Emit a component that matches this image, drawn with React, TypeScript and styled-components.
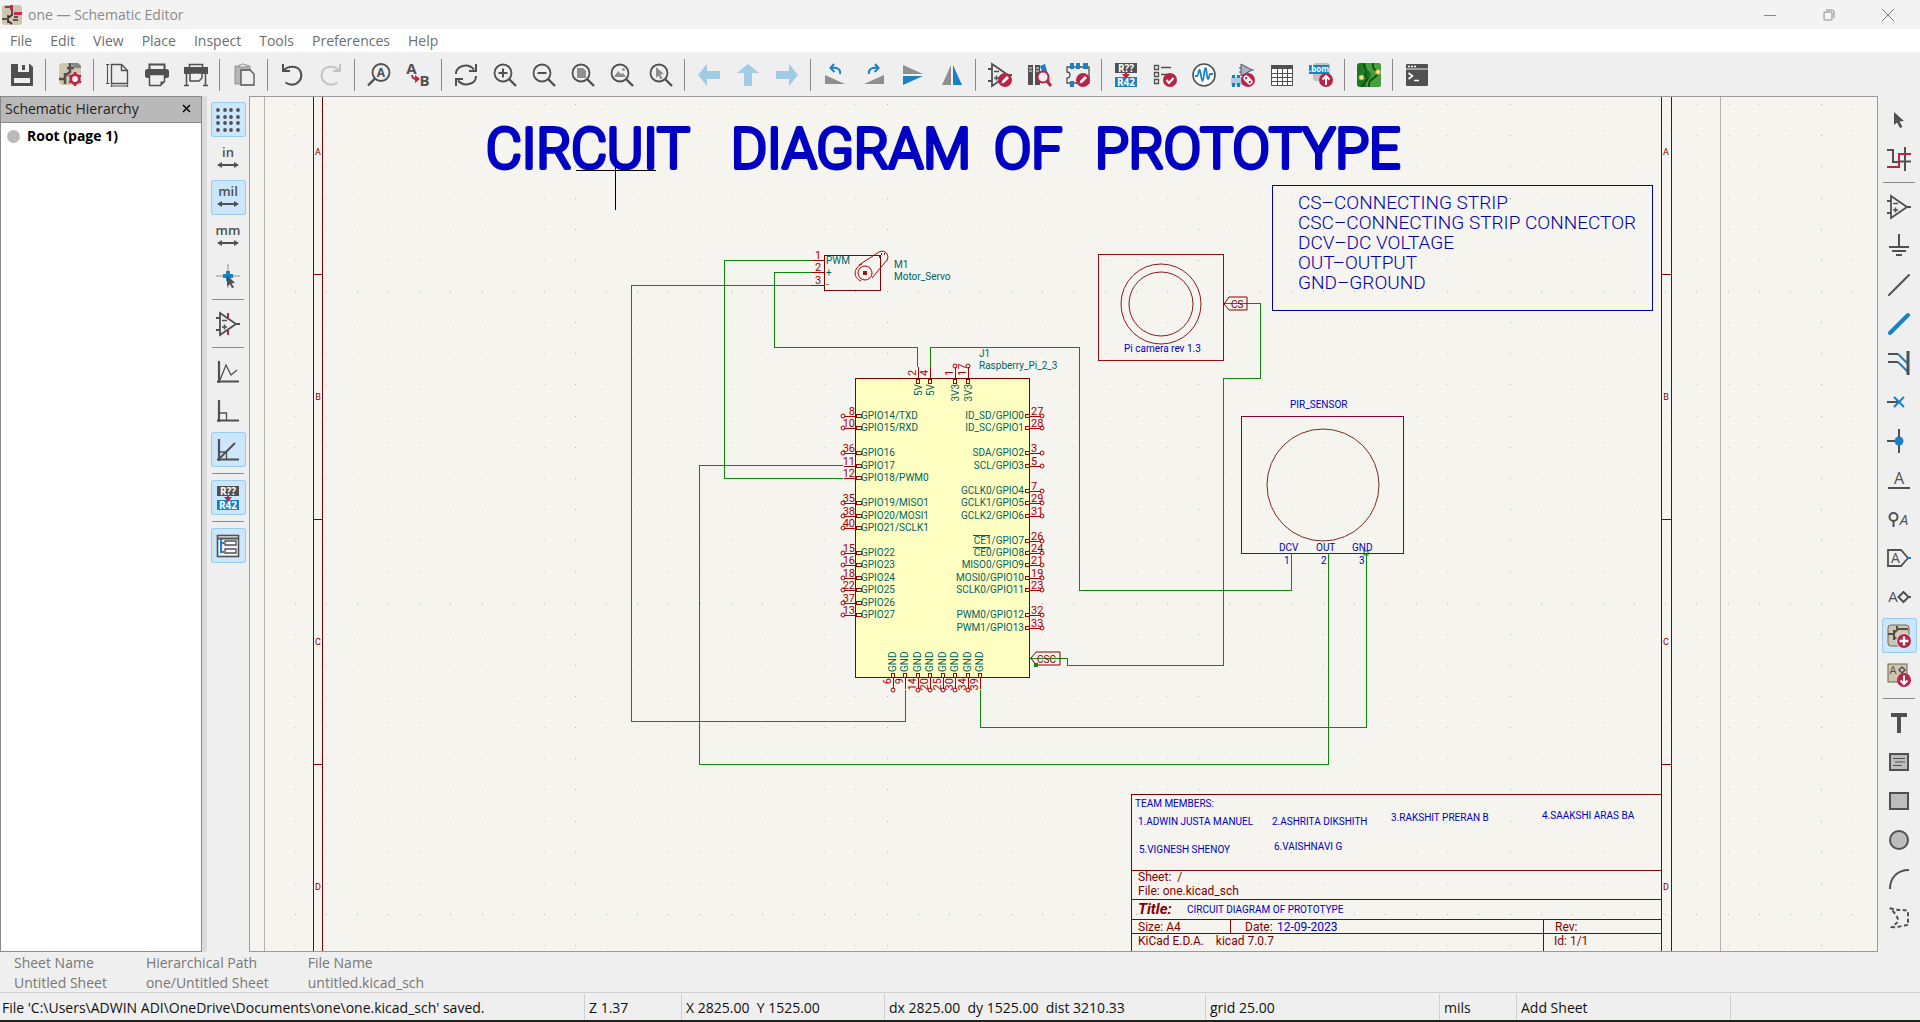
import React from "react";
import styled, { createGlobalStyle, css } from "styled-components";

const ui = `"Open Sans", "Noto Sans", sans-serif`;
const INK = "#505050";
const BLUE = "#1a81c4";
const RED = "#b92549";
const MID = "#8f8f8f";
const PANEL = "#efefef";

const GlobalStyle = createGlobalStyle`
  *, *::before, *::after { box-sizing: border-box; }
  html, body { margin: 0; height: 100%; }
  body { font-family: ${ui}; background: ${PANEL}; color: #111; overflow: hidden; }
  button { font: inherit; color: inherit; background: none; border: 0; padding: 0; margin: 0; }
`;

const Window = styled.div`
  display: flex;
  flex-direction: column;
  height: 100vh;
  background: ${PANEL};
  border-bottom: 2px solid #1d221d;
`;

const TitleBar = styled.header`
  display: flex;
  align-items: center;
  flex: none;
  height: 29px;
  padding: 0 3px 0 2px;
  background: #f3f3f3;
`;

const WindowTitle = styled.h1`
  flex: 1;
  margin: 0 0 0 6px;
  font-size: 14px;
  font-weight: 400;
  line-height: 20px;
  color: #8c8c8c;
`;

const WindowButton = styled.button`
  display: grid;
  place-items: center;
  width: 59px;
  height: 28px;
`;

const MenuBar = styled.nav`
  display: flex;
  align-items: center;
  flex: none;
  gap: 18px;
  height: 23px;
  padding: 1px 0 0 10px;
  background: #fff;
`;

const MenuItem = styled.button`
  font-size: 14px;
  line-height: 20px;
  color: #6e6e6e;
`;

const TopTools = styled.div`
  display: flex;
  align-items: center;
  flex: none;
  height: 44px;
  padding: 1px 2px 0;
  background: ${PANEL};
`;

const SideTools = styled.div`
  display: flex;
  flex-direction: column;
  align-items: center;
  flex: none;
  width: 42px;
  padding-top: 4px;
  background: ${PANEL};
`;

const ToolButton = styled.button<{ $on?: boolean }>`
  display: grid;
  place-items: center;
  flex: none;
  width: 39px;
  height: 39px;
  border: 2px solid transparent;
  background-clip: padding-box;

  ${(p) =>
    p.$on &&
    css`
      background-color: #cce6fb;
      box-shadow: inset 0 0 0 1px #9ccbf0;
      border-radius: 5px;
    `}
`;

const Glyph = styled.svg`
  display: block;
  width: 24px;
  height: 24px;
  overflow: visible;
`;

const Divider = styled.div<{ $flat?: boolean }>`
  flex: none;
  background: #8a8a8a;
  ${(p) =>
    p.$flat
      ? css`
          width: 32px;
          height: 1px;
          margin: 4px 0;
        `
      : css`
          width: 1px;
          height: 32px;
          margin: 0 4px;
        `}
`;

const Work = styled.main`
  display: flex;
  flex: 1;
  min-height: 0;
`;

const Hierarchy = styled.aside`
  display: flex;
  flex-direction: column;
  flex: none;
  width: 202px;
  border: 1px solid #8a8a8a;
  background: #fff;
`;

const HierarchyHead = styled.div`
  display: flex;
  align-items: center;
  justify-content: space-between;
  height: 26px;
  padding: 0 9px 2px 4px;
  background: #b9b9b9;
  border-bottom: 1px solid #8a8a8a;
  font-size: 14px;
  line-height: 20px;
  color: #222;
`;

const HierarchyItem = styled.button`
  display: flex;
  align-items: center;
  gap: 7px;
  height: 26px;
  padding-left: 6px;
  font-size: 14px;
  font-weight: 700;
  line-height: 20px;
  color: #000;
`;

const Bullet = styled.span`
  width: 13px;
  height: 13px;
  border-radius: 50%;
  background: #bababa;
`;

const Sash = styled.div`
  flex: none;
  width: 5px;
  background: #dcdcdc;
`;

const Canvas = styled.section`
  position: relative;
  flex: 1;
  min-width: 0;
  border: 1px solid #9a9a9a;
  background: #f5f4ef;
  overflow: hidden;
`;

const Sheet = styled.svg`
  position: absolute;
  inset: 0;
  width: 100%;
  height: 100%;
  font-family: Roboto, sans-serif;
  font-size: 10px;
`;

const MessagePanel = styled.dl`
  display: flex;
  flex: none;
  gap: 39px;
  height: 41px;
  margin: 0;
  padding: 1px 14px 0;
  color: #777;
  font-size: 14px;
  line-height: 20px;
  border-bottom: 1px solid #cfcfcf;

  dt, dd { margin: 0; }
`;

const StatusBar = styled.footer`
  display: grid;
  grid-template-columns: 585fr 97fr 203fr 321fr 234fr 77fr 214fr 189fr;
  align-items: center;
  flex: none;
  height: 27px;
`;

const StatusField = styled.output`
  height: 26px;
  padding-left: 4px;
  overflow: hidden;
  border-right: 1px solid #cfcfcf;
  font-size: 14px;
  line-height: 27px;
  white-space: pre;
  color: #111;

  &:first-child { padding-left: 2px; }
  &:last-child { border-right: 0; }
`;

/* ---------- icons ---------- */

const line = { fill: "none", stroke: INK, strokeWidth: 2 } as const;
const bold = { fontFamily: "Open Sans, sans-serif", fontWeight: 700 } as const;

const Badge = ({ children }: { children: React.ReactNode }) => (
  <g>
    <circle cx="17" cy="17" r="7" fill={RED} />
    {children}
  </g>
);

const Pencil = () => (
  <Badge>
    <path d="M13.500 20.500l1-3 4.500-4.500 2 2-4.500 4.500z" fill="#fff" />
  </Badge>
);

const Magnifier = ({ children }: { children?: React.ReactNode }) => (
  <g>
    {children}
    <circle cx="10" cy="10" r="8.500" {...line} strokeWidth={1.8} />
    <path d="M16 16l7 7" {...line} strokeWidth={2.4} />
  </g>
);

const Opamp = ({ pins = false }: { pins?: boolean }) => (
  <g>
    {pins && <path d="M12 1v5M12 18v5" stroke={RED} strokeWidth="2" />}
    <path d="M4 1v22L20 12z M20 12h4 M0 6h4 M0 18h4" {...line} strokeWidth={1.8} />
    <path d="M6 8.500h5M6 15h5M8.500 12.500v5" {...line} strokeWidth={1.5} />
  </g>
);

const Annotate = () => (
  <g>
    <rect x="1" y="0" width="22" height="10" fill={INK} />
    <rect x="1" y="14" width="22" height="10" fill={BLUE} />
    <path d="M11 9h2v2h3l-4 5-4-5h3z" fill={RED} />
    <text x="12" y="9" textAnchor="middle" fontSize="10" fill="#fff" {...bold}>R??</text>
    <text x="12" y="23" textAnchor="middle" fontSize="10" fill="#fff" {...bold}>R42</text>
  </g>
);

const Unit = ({ label }: { label: string }) => (
  <g>
    <text x="12" y="10" textAnchor="middle" fontSize="13" fontFamily="Open Sans, sans-serif" fontWeight="600" fill={INK}>{label}</text>
    <path d="M4 18h16" {...line} />
    <path d="M1 18l5-3v6zM23 18l-5-3v6z" fill={INK} />
  </g>
);

const Arrow = ({ turn }: { turn: number }) => (
  <path transform={`rotate(${turn} 12 12)`} d="M1 12l9-11v7h13v8H10v7z" fill="#9fcbe6" />
);

const icons: Record<string, React.ReactNode> = {
  save: (
    <g>
      <path d="M1 1h19l3 3v19H1z" fill={INK} />
      <path d="M8 1h11v8H8z M4 15h16v5H4z" fill={PANEL} />
      <path d="M12 2h3v5h-3z" fill={INK} />
    </g>
  ),
  setup: (
    <g>
      <rect x="1" y="0" width="22" height="22" rx="4" fill="#d2c5ad" />
      <path d="M1 16h6M7 10v11M7 13l5-4V0M9 5h7" {...line} strokeWidth={2.5} />
      <path d="M12 0l5 5h6V3l-3-3z" fill="#858585" />
      <circle cx="17" cy="16" r="4.200" fill={PANEL} stroke={RED} strokeWidth="2.600" />
      <path d="M17 9v3M17 20v3M11 12.500l2.500 1.500M20.500 18l2.500 1.500M11 19.500l2.500-1.500M20.500 14l2.500-1.500" stroke={RED} strokeWidth="2.600" />
    </g>
  ),
  page: (
    <g>
      <path d="M5.500 1.500h10l6 6v13h-16z M15.500 1.500v6h6" {...line} strokeWidth={1.4} />
      <path d="M1.500 1v20M0 1.500h3.500M0 20.500h3.500M5 23h17M5.500 21.500v2.500M21.500 21.500v2.500" {...line} strokeWidth={1.1} />
    </g>
  ),
  print: (
    <g>
      <path d="M4.500 6V1.500h15V6" {...line} />
      <rect x="0" y="6" width="24" height="9" rx="2.500" fill={INK} />
      <path d="M4.500 11.500h15v7l-4 4h-11z" fill={PANEL} stroke={INK} strokeWidth="1.500" />
      <path d="M15.500 22.500v-4h4z" fill={INK} />
    </g>
  ),
  plot: (
    <g>
      <path d="M5.500 4V1.500h13V4" {...line} strokeWidth={1.5} />
      <path d="M0 4h24v7H0z" fill={INK} />
      <path d="M6 10h12v5l-3 3H6z" fill={PANEL} stroke={INK} strokeWidth="1.500" />
      <path d="M2.500 10v12M21.500 10v12M0 22.500h5M19 22.500h5" {...line} strokeWidth={1.5} />
    </g>
  ),
  paste: (
    <g>
      <path d="M3 3h15v18H3z" fill="#b5b5b5" stroke={MID} />
      <path d="M7 4V2h2l1-1h2l1 1h2v2z" fill={PANEL} stroke={MID} />
      <path d="M9 7h9l4 4v11H9z" fill={PANEL} stroke={INK} strokeWidth="1.300" />
    </g>
  ),
  undo: <path d="M3 1v7h7M3.500 7.500c5-5 13-5 16.500 0 3 5 1 11-4.500 13.500-3 1-7 .6-10-1.500" {...line} />,
  redo: <path d="M21 1v7h-7M20.500 7.500c-5-5-13-5-16.500 0-3 5-1 11 4.500 13.500 3 1 7 .6 10-1.500" {...line} stroke="#c3c3c3" />,
  find: (
    <g>
      <circle cx="14" cy="9.500" r="8.500" {...line} strokeWidth={1.8} />
      <path d="M8 15.500l-7 7" {...line} strokeWidth={2.4} />
      <text x="14" y="14" textAnchor="middle" fontSize="12" fill={INK} {...bold}>A</text>
    </g>
  ),
  replace: (
    <g>
      <text x="5.500" y="11" textAnchor="middle" fontSize="15" fill={INK} {...bold}>A</text>
      <text x="18.500" y="23" textAnchor="middle" fontSize="15" fill={INK} {...bold}>B</text>
      <path d="M6 12c0 3 2 4 5 4" fill="none" stroke={RED} strokeWidth="2" />
      <path d="M9 12l5 4-5 4z" fill={RED} />
    </g>
  ),
  refresh: <path d="M2 11C2 2.500 14-.5 20 6.500M22 1v7h-7M22 13c0 8.500-12 11.500-18 4.500M2 23v-7h7" {...line} />,
  zoomin: <Magnifier><path d="M5.500 10h9M10 5.500v9" {...line} /></Magnifier>,
  zoomout: <Magnifier><path d="M5.500 10h9" {...line} /></Magnifier>,
  zoomfit: <Magnifier><path d="M6 5h6l3 3v7H6z" fill={MID} /></Magnifier>,
  zoomobj: <Magnifier><path d="M4 14l4-6 3 3 2-1 3 4z" fill={MID} /><circle cx="13.500" cy="6.500" r="1.500" fill={MID} /></Magnifier>,
  zoomsel: <Magnifier><path d="M7 4l8 7-3.500.5 2 4-2 1-2-4L7 15z" fill={MID} /></Magnifier>,
  back: <Arrow turn={0} />,
  up: <Arrow turn={90} />,
  forward: <Arrow turn={180} />,
  ccw: (
    <g>
      <path d="M2 12v9h20z" fill={MID} />
      <path d="M17 11c1-5-3-7-9-6M11 1L7.500 5l4 4" fill="none" stroke={BLUE} strokeWidth="2" />
    </g>
  ),
  cw: (
    <g>
      <path d="M22 12v9H2z" fill={MID} />
      <path d="M7 11c-1-5 3-7 9-6M13 1l3.500 4-4 4" fill="none" stroke={BLUE} strokeWidth="2" />
    </g>
  ),
  flipv: (
    <g>
      <path d="M2 2v9h20z" fill={MID} />
      <path d="M2 22v-9h20z" fill={BLUE} />
    </g>
  ),
  fliph: (
    <g>
      <path d="M2 22h9V2z" fill={MID} />
      <path d="M22 22h-9V2z" fill={BLUE} />
    </g>
  ),
  symed: <g><Opamp /><Pencil /></g>,
  library: (
    <g>
      <path d="M1 2h5v20H1zM8 2h5v20H8z" fill={INK} />
      <path d="M13 3l5-2 5 17-4 2z" fill={BLUE} />
      <path d="M2 5h3M2 8h3M9 5h3M9 8h3" stroke={PANEL} />
      <circle cx="16" cy="14" r="5.500" fill={PANEL} stroke={RED} strokeWidth="2" />
      <path d="M20 18l4 5" stroke={RED} strokeWidth="3" />
    </g>
  ),
  fped: (
    <g>
      <path d="M1 4h22v16H1v-5c4 0 4-6 0-6z" fill="none" stroke={INK} strokeWidth="1.300" />
      <path d="M4 0h4v6H4zM10 0h4v6h-4zM17 0h5v6h-5zM4 18h4v6H4z" fill={BLUE} />
      <Pencil />
    </g>
  ),
  annotate: <Annotate />,
  erc: (
    <g>
      <path d="M1.500 2.500h4v4h-4zM1.500 9.500h4v4h-4zM1.500 16.500h4v4h-4z" {...line} strokeWidth={1.3} />
      <path d="M8 4.500h10M8 11.500h6" {...line} strokeWidth={1.5} />
      <Badge><path d="M13.500 17l2.500 3 4.500-5" fill="none" stroke="#fff" strokeWidth="2" /></Badge>
    </g>
  ),
  sim: (
    <g>
      <circle cx="12" cy="12" r="11" fill="#fff" stroke={INK} strokeWidth="1.600" />
      <path d="M3 13h2c2 0 1-6 2.500-6S9 18 10.500 18 12 5 13.500 5s1 11 2.500 11 1-5 2-5h3" fill="none" stroke={BLUE} strokeWidth="1.800" />
    </g>
  ),
  assign: (
    <g>
      <path d="M10 1v12l11-6zM8 5h2M8 9h2M21 7h2" fill="#a5b5c5" stroke={INK} />
      <path d="M0 14h13v8H0z" fill="#a8cce4" />
      <path d="M1 12h3v3H1zM6 12h3v3H6zM1 20h3v4H1zM6 20h3v4H6z" fill={BLUE} />
      <Badge>
        <g transform="rotate(45 17 17)" fill="none" stroke="#fff" strokeWidth="1.500">
          <rect x="12.500" y="15" width="5.500" height="4" rx="2" />
          <rect x="16" y="15" width="5.500" height="4" rx="2" />
        </g>
      </Badge>
    </g>
  ),
  table: (
    <g>
      <path d="M1.500 2.500h21v20h-21z" fill="#fff" stroke={INK} />
      <path d="M1 2h22v4H1z" fill={INK} />
      <path d="M1.500 10.500h21M1.500 14.500h21M1.500 18.500h21M7.500 6v16M12.500 6v16M17.500 6v16" fill="none" stroke={INK} />
    </g>
  ),
  bom: (
    <g>
      <rect x="4" y="0" width="17" height="18" rx="3" fill="#c2c2c2" />
      <rect x="0" y="2" width="20" height="9" fill={BLUE} />
      <text x="10" y="9" textAnchor="middle" fontSize="8" fill="#fff" {...bold}>.bom</text>
      <Badge><path d="M17 22v-8M13.500 16.500L17 13l3.500 3.500" fill="none" stroke="#fff" strokeWidth="2" /></Badge>
    </g>
  ),
  pcb: (
    <g>
      <rect width="24" height="24" rx="3" fill="#1b7a1f" />
      <path d="M9 0v3c0 6 5 4 5 9s-5 4-5 8v4h12q3 0 3-3V3q0-3-3-3z" fill="#45a03f" />
      <path d="M4.500 14.500c4-1 5-2 5-6s-3-4-3-8M12 24v-3c0-6 8-5 9-12M16 0v3c0 3 2 4 5 6M5 24c0-4 6-5 6-10" fill="none" stroke="#0d5212" strokeWidth="1.800" />
      <circle cx="4.500" cy="14.500" r="2" fill="#fff" stroke="#eab23c" strokeWidth="1.500" />
      <circle cx="21" cy="9" r="2" fill="#fff" stroke="#eab23c" strokeWidth="1.500" />
    </g>
  ),
  console: (
    <g>
      <rect x="1" y="1" width="22" height="22" rx="1" fill={INK} />
      <path d="M1 6h22" stroke={PANEL} />
      <path d="M3 3.500h2M6 3.500h2M9 3.500h2" stroke="#fff" strokeWidth="1.500" />
      <path d="M3.500 10l4 3-4 3M9 17.500h5" fill="none" stroke="#fff" strokeWidth="1.600" />
    </g>
  ),
  grid: (
    <g fill={INK}>
      {[2, 9, 15, 22].map((y) => [2, 9, 15, 22].map((x) => <circle key={`${x}-${y}`} cx={x} cy={y} r="1.900" />))}
    </g>
  ),
  inch: <Unit label="in" />,
  mil: <Unit label="mil" />,
  mm: <Unit label="mm" />,
  cursor: (
    <g>
      <path d="M0 12h24M12 0v24" stroke={MID} />
      <path d="M7 12h10M12 7v10" stroke={BLUE} strokeWidth="4" />
      <path d="M11 11l8 8-3.500.3 2.500 4-2 1-2-4-3 2z" fill={INK} />
    </g>
  ),
  hidden: <Opamp pins />,
  free: <g><path d="M3 1v22M1 21.500h22" {...line} strokeWidth={2.2} /><path d="M4 20l6-15 5 10 6-5" {...line} strokeWidth={1.3} /></g>,
  ortho: <g><path d="M3 1v22M1 21.500h22" {...line} strokeWidth={2.2} /><path d="M4 14h6.500v7" {...line} strokeWidth={1.3} /></g>,
  angle: <g><path d="M3 1v22M1 21.500h22" {...line} strokeWidth={2.2} /><path d="M4 14h6.500v7" {...line} strokeWidth={1.3} /><path d="M3 21L19 5" {...line} /></g>,
  tree: (
    <g>
      <rect x="1.500" y="1.500" width="21" height="21" {...line} strokeWidth={1.6} fill="#f4f4f4" />
      <path d="M1 4.500h22" {...line} />
      <path d="M5 5v13h3M5 9h3" fill="none" stroke={BLUE} strokeWidth="2" />
      <path d="M9 7h11v4H9zM9 15h11v4H9z" fill="#fff" stroke={INK} strokeWidth="1.300" />
    </g>
  ),
  select: <path d="M7 4l10 9-4.500.5L15.500 19l-2.500 1-3-5.500L7 17z" fill={INK} />,
  net: (
    <g>
      <path d="M0 3h6v12h6M18 0v24M12 14.500h12" {...line} />
      <path d="M0 20h12V7h12" fill="none" stroke={RED} strokeWidth="2" />
    </g>
  ),
  symbol: <Opamp />,
  power: <path d="M12 0v13M2 13h20M5 17h14M9 21h6" {...line} />,
  wire: <path d="M2 22L22 2" {...line} strokeLinecap="round" />,
  bus: <path d="M3 21L21 3" stroke={BLUE} strokeWidth="4" strokeLinecap="round" />,
  entry: (
    <g>
      <path d="M1 3h10M1 11h10" {...line} />
      <path d="M11 3l10 10M11 11l10 10" stroke={BLUE} strokeWidth="2" />
      <path d="M21 0v24" {...line} strokeWidth={3} />
    </g>
  ),
  noconn: <g><path d="M0 12h12" {...line} /><path d="M7 7l10 10M17 7L7 17" stroke={BLUE} strokeWidth="2" /></g>,
  junction: <g><path d="M0 12h12M12 0v24" {...line} /><circle cx="12" cy="12" r="4.500" fill={BLUE} /></g>,
  label: (
    <g>
      <text x="12" y="16" textAnchor="middle" fontSize="16" fontFamily="Open Sans, sans-serif" fill={INK}>A</text>
      <path d="M1 20h22" {...line} />
    </g>
  ),
  directive: (
    <g>
      <circle cx="6.500" cy="10" r="4" {...line} />
      <path d="M6.500 14v6" {...line} />
      <text x="17" y="18" textAnchor="middle" fontSize="15" fontStyle="italic" fontFamily="Open Sans, sans-serif" fill={INK}>A</text>
    </g>
  ),
  global: (
    <g>
      <path d="M1 4h13l7 8-7 8H1z" {...line} strokeWidth={1.8} />
      <path d="M21 12h3" stroke={BLUE} strokeWidth="2" />
      <text x="8.500" y="17" textAnchor="middle" fontSize="14" fontFamily="Open Sans, sans-serif" fill={INK}>A</text>
    </g>
  ),
  hier: (
    <g>
      <text x="6" y="17" textAnchor="middle" fontSize="15" fontFamily="Open Sans, sans-serif" fill={INK}>A</text>
      <path d="M16.500 7l5 5-5 5-5-5zM21 12h3" {...line} />
    </g>
  ),
  sheet: (
    <g>
      <rect x="1" y="1" width="21" height="21" rx="3" fill="#d2c5ad" stroke="#6e6653" />
      <path d="M1 10h6M7 6v10M7 9l4-4h10M7 13l5 3M10 2v3" {...line} />
      <circle cx="17" cy="17" r="8" fill="#cce6fb" />
      <Badge><path d="M12.500 17h9M17 12.500v9" stroke="#fff" strokeWidth="2.400" /></Badge>
    </g>
  ),
  sheetpin: (
    <g>
      <rect x="1" y="1" width="19" height="18" fill="#d2c5ad" stroke="#6e6653" />
      <text x="6" y="11" textAnchor="middle" fontSize="11" fontFamily="Open Sans, sans-serif" fill={INK}>A</text>
      <path d="M15 4l3 3-3 3-3-3z" {...line} strokeWidth={1.5} />
      <Badge><path d="M17 12.500v8M13.500 17.500L17 21l3.500-3.500" fill="none" stroke="#fff" strokeWidth="2" /></Badge>
    </g>
  ),
  text: <path d="M4 2h16v4h-6v16h-4V6H4z" fill={INK} />,
  textbox: (
    <g>
      <rect x="3" y="4" width="18" height="16" fill="#bdbdbd" stroke={INK} strokeWidth="2" />
      <path d="M6 8.500h12M8 12h10M6 15.500h9" {...line} strokeWidth={1.2} />
    </g>
  ),
  rect: <rect x="3" y="4" width="18" height="16" fill="#bdbdbd" stroke={INK} strokeWidth="2" />,
  circle: <circle cx="12" cy="12" r="9" fill="#bdbdbd" stroke={INK} strokeWidth="2" />,
  arc: <path d="M3 22C3 11 10 3 22 3" {...line} />,
  lasso: <path d="M3 2c6 3 12 1 18 3v14c-5 0-10 3-16 2 3-3 6-4 6-7S7 6 3 2z" {...line} strokeDasharray="4 2.500" />,
};

const Icon = ({ name }: { name: string }) => (
  <Glyph viewBox="0 0 24 24" aria-hidden="true">{icons[name]}</Glyph>
);

type Tool = [icon: string, label: string, on?: boolean] | null;

const topTools: Tool[] = [
  ["save", "Save"], null, ["setup", "Schematic setup"], null,
  ["page", "Page settings"], ["print", "Print"], ["plot", "Plot"], null,
  ["paste", "Paste"], null, ["undo", "Undo"], ["redo", "Redo"], null,
  ["find", "Find"], ["replace", "Find and replace"], null,
  ["refresh", "Refresh"], ["zoomin", "Zoom in"], ["zoomout", "Zoom out"], ["zoomfit", "Zoom to fit"],
  ["zoomobj", "Zoom to objects"], ["zoomsel", "Zoom to selection"], null,
  ["back", "Navigate back"], ["up", "Navigate up"], ["forward", "Navigate forward"], null,
  ["ccw", "Rotate counterclockwise"], ["cw", "Rotate clockwise"], ["flipv", "Mirror vertically"], ["fliph", "Mirror horizontally"], null,
  ["symed", "Symbol editor"], ["library", "Symbol library browser"], ["fped", "Footprint editor"], null,
  ["annotate", "Annotate"], ["erc", "Electrical rules checker"], ["sim", "Simulator"], ["assign", "Assign footprints"],
  ["table", "Symbol fields table"], ["bom", "Generate BOM"], null,
  ["pcb", "Switch to PCB editor"], null, ["console", "Scripting console"],
];

const leftTools: Tool[] = [
  ["grid", "Show grid", true], ["inch", "Inches"], ["mil", "Mils", true], ["mm", "Millimeters"], ["cursor", "Full-window crosshair"], null,
  ["hidden", "Show hidden pins"], null, ["free", "Free angle"], ["ortho", "Right angle"], ["angle", "45 degree", true], null,
  ["annotate", "Annotate automatically", true], null, ["tree", "Hierarchy navigator", true],
];

const rightTools: Tool[] = [
  ["select", "Select"], ["net", "Highlight net"], null,
  ["symbol", "Add symbol"], ["power", "Add power"], ["wire", "Add wire"], ["bus", "Add bus"], ["entry", "Add bus entry"],
  ["noconn", "Add no-connect"], ["junction", "Add junction"], ["label", "Add label"], ["directive", "Add net class directive"],
  ["global", "Add global label"], ["hier", "Add hierarchical label"], ["sheet", "Add sheet", true], ["sheetpin", "Import sheet pin"], null,
  ["text", "Add text"], ["textbox", "Add text box"], ["rect", "Add rectangle"], ["circle", "Add circle"], ["arc", "Add arc"], ["lasso", "Delete"],
];

const Tools = ({ items, flat }: { items: Tool[]; flat?: boolean }) => (
  <>
    {items.map((t, i) =>
      t ? (
        <ToolButton key={i} type="button" $on={t[2]} aria-pressed={t[2]} aria-label={t[1]}>
          <Icon name={t[0]} />
        </ToolButton>
      ) : (
        <Divider key={i} $flat={flat} />
      ),
    )}
  </>
);

/* ---------- schematic ---------- */

const FRAME = "#840000";
const WIRE = "#0a8a0a";
const PIN = "#a90000";
const NAME = "#006464";
const NOTE = "#0000c2";
const STEP = 12.45;

type Pin = [row: number, number: string, name: string, wired?: boolean];

const leftPins: Pin[] = [
  [0, "8", "GPIO14/TXD"], [1, "10", "GPIO15/RXD"], [3, "36", "GPIO16"], [4, "11", "GPIO17", true], [5, "12", "GPIO18/PWM0", true],
  [7, "35", "GPIO19/MISO1"], [8, "38", "GPIO20/MOSI1"], [9, "40", "GPIO21/SCLK1"],
  [11, "15", "GPIO22"], [12, "16", "GPIO23"], [13, "18", "GPIO24"], [14, "22", "GPIO25"], [15, "37", "GPIO26"], [16, "13", "GPIO27"],
];
const rightPins: Pin[] = [
  [0, "27", "ID_SD/GPIO0"], [1, "28", "ID_SC/GPIO1"], [3, "3", "SDA/GPIO2"], [4, "5", "SCL/GPIO3"],
  [6, "7", "GCLK0/GPIO4"], [7, "29", "GCLK1/GPIO5"], [8, "31", "GCLK2/GPIO6"],
  [10, "26", "CE1/GPIO7"], [11, "24", "CE0/GPIO8"], [12, "21", "MISO0/GPIO9"], [13, "19", "MOSI0/GPIO10"], [14, "23", "SCLK0/GPIO11"],
  [16, "32", "PWM0/GPIO12"], [17, "33", "PWM1/GPIO13"],
];
const topPins: Pin[] = [[2, "2", "5V", true], [3, "4", "5V", true], [5, "1", "3V3"], [6, "17", "3V3"]];
const bottomPins: Pin[] = [
  [0, "6", "GND"], [1, "9", "GND", true], [2, "14", "GND"], [3, "20", "GND"], [4, "25", "GND"], [5, "30", "GND"], [6, "34", "GND"], [7, "39", "GND", true],
];

const wires = [
  "M811 260H724V478H843",
  "M811 272H774V347H917V367",
  "M811 285H631V721H905V690",
  "M843 465H699V764H1328V553",
  "M930 367V347H1079V590H1291V553",
  "M980 690V727H1366V553",
  "M1224 303H1260V378H1223V665H1067V658H1030",
];

const gridDots = (major: boolean) => {
  let d = "";
  for (let c = -10; c <= 42; c++)
    for (let r = -6; r <= 21; r++) {
      const onMajor = c % 10 === 0 || r % 10 === 0;
      if (onMajor === major) d += `M${Math.round(575 + c * 31.15)} ${Math.round(291 + r * 31.15)}h1v1h-1z`;
    }
  return d;
};

const titleWords: [number, string][] = [[486, "CIRCUIT"], [731, "DIAGRAM"], [994, "OF"], [1095, "PROTOTYPE"]];

const legend = [
  "CS–CONNECTING STRIP",
  "CSC–CONNECTING STRIP CONNECTOR",
  "DCV–DC VOLTAGE",
  "OUT–OUTPUT",
  "GND–GROUND",
];

const notes: [number, number, string][] = [
  [1124, 352, "Pi camera rev 1.3"], [1290, 408, "PIR_SENSOR"],
  [1279, 551, "DCV"], [1316, 551, "OUT"], [1352, 551, "GND"],
  [1284, 564, "1"], [1321, 564, "2"], [1359, 564, "3"],
  [1135, 807, "TEAM MEMBERS:"],
  [1138, 825, "1.ADWIN JUSTA MANUEL"], [1272, 825, "2.ASHRITA DIKSHITH"], [1391, 821, "3.RAKSHIT PRERAN B"],
  [1542, 819, "4.SAAKSHI ARAS BA"], [1139, 853, "5.VIGNESH SHENOY"], [1274, 850, "6.VAISHNAVI G"],
  [1187, 913, "CIRCUIT DIAGRAM OF PROTOTYPE"],
];

const blockTexts: [number, number, string][] = [
  [1138, 881, "Sheet:  /"], [1138, 895, "File: one.kicad_sch"], [1138, 931, "Size: A4"], [1245, 931, "Date:"],
  [1555, 931, "Rev:"], [1138, 945, "KiCad E.D.A.    kicad 7.0.7"], [1554, 945, "Id: 1/1"],
];

const Schematic = () => (
  <Sheet role="img" aria-label="Circuit diagram of prototype">
    <g transform="translate(-250 -97)">
      <g shapeRendering="crispEdges">
        <path d={gridDots(false)} fill="#cfcfcb" />
        <path d={gridDots(true)} fill="#adadaa" />
        <path d="M264 90V960M1720 90V960" stroke="#b3b3b0" fill="none" />
        <path d="M313 90V960M322 90V960M1661 90V960M1671 90V960M313 274h9M313 519h9M313 764h9M1661 274h10M1661 519h10M1661 764h10" stroke={FRAME} fill="none" />
        <path d="M1131 960V794H1661M1131 870H1661M1131 899H1661M1131 919H1661M1131 933H1661M1230 919v14M1543 919v41" stroke={FRAME} fill="none" />
        <rect x="1272" y="185" width="380" height="125" fill="none" stroke="#0000a8" />
        <rect x="1098" y="254" width="125" height="106" fill="none" stroke="#980c0c" />
        <rect x="1241" y="416" width="162" height="137" fill="none" stroke="#840030" />
        <rect x="824" y="255" width="56" height="35" fill="none" stroke={FRAME} />
        <rect x="855" y="378" width="174" height="299" fill="#ffffc2" stroke={FRAME} />
        {wires.map((d) => <path key={d} d={d} fill="none" stroke={WIRE} />)}
        <path d="M811 260h14M811 272h14M811 285h14" stroke={PIN} />
      </g>

      {["A", "B", "C", "D"].map((l, i) => (
        <g key={l} fill={FRAME} fontSize="9" textAnchor="middle">
          <text x="318" y={155 + i * 245}>{l}</text>
          <text x="1666" y={155 + i * 245}>{l}</text>
        </g>
      ))}

      <g fill={NOTE} stroke={NOTE} strokeWidth="4" strokeLinejoin="round" fontSize="55" fontWeight="300">
        {titleWords.map(([x, w]) => <text key={w} x={x} y="168">{w}</text>)}
      </g>
      <path d="M615 130v80M576 170h80" stroke="#000" shapeRendering="crispEdges" />

      <g fill="#0000a8" fontSize="19" fontWeight="300">
        {legend.map((t, i) => <text key={t} x="1298" y={209 + i * 20}>{t}</text>)}
      </g>

      <g fill="none" stroke="#8c1a1a">
        <circle cx="1161" cy="304" r="40" />
        <circle cx="1161" cy="304" r="32" />
        <circle cx="1323" cy="485" r="56" stroke="#7b2b1e" />
        <path d="M1224 304l5-7h18v13h-18zM1031 658l5-6h24v13h-24z" stroke={FRAME} />
        <g stroke={PIN}>
          <circle cx="865" cy="273" r="7" />
          <path d="M862 264c-9 4-9 14-1 17M859 265l20-13c6-3 11 3 8 8l-15 18" />
        </g>
        <path d="M864 272h2v2h-2zM879 257h1M881 254h1M884 254h1" strokeWidth="2" />
      </g>
      <g fill={FRAME}>
        <text x="1231" y="308">CS</text>
        <text x="1037" y="663">CSC</text>
      </g>
      <rect x="1034" y="663" width="4" height="4" fill={WIRE} />
      <rect x="1364" y="551" width="4" height="4" fill="none" stroke={WIRE} />

      <g fill={NAME}>
        <text x="894" y="268">M1</text>
        <text x="894" y="280">Motor_Servo</text>
        <text x="979" y="357">J1</text>
        <text x="979" y="369">Raspberry_Pi_2_3</text>
        <text x="826" y="264">PWM</text>
        <text x="826" y="276">+</text>
        <text x="826" y="288">-</text>
      </g>
      <g fill={PIN} fontSize="11">
        <text x="815" y="259">1</text>
        <text x="815" y="271">2</text>
        <text x="815" y="284">3</text>
      </g>

      {leftPins.map(([row, no, name, wired]) => {
        const y = Math.round(416 + row * STEP);
        return (
          <g key={no}>
            <path d={`M844 ${y}H855M856 ${y - 2}h5v3h-5z`} stroke={PIN} fill="none" shapeRendering="crispEdges" />
            {!wired && <circle cx="843" cy={y} r="2" stroke={PIN} fill="none" />}
            <text x="855" y={y - 1} textAnchor="end" fontSize="11" fill={PIN}>{no}</text>
            <text x="861" y={y + 3} fill={NAME}>{name}</text>
          </g>
        );
      })}
      {rightPins.map(([row, no, name]) => {
        const y = Math.round(416 + row * STEP);
        return (
          <g key={no}>
            <path d={`M1029 ${y}H1041M1025 ${y - 2}h4v3h-4z`} stroke={PIN} fill="none" shapeRendering="crispEdges" />
            <circle cx="1042" cy={y} r="2" stroke={PIN} fill="none" />
            <text x="1031" y={y - 1} fontSize="11" fill={PIN}>{no}</text>
            <text x="1024" y={y + 3} textAnchor="end" fill={NAME}>{name}</text>
          </g>
        );
      })}
      <path d="M973 535h17M973 547h17" stroke={NAME} shapeRendering="crispEdges" />
      {topPins.map(([col, no, name, wired]) => {
        const x = Math.round(893 + col * STEP);
        return (
          <g key={no}>
            <path d={`M${x} 367V378M${x - 2} 379h3v4h-3z`} stroke={PIN} fill="none" shapeRendering="crispEdges" />
            {!wired && <circle cx={x} cy="366" r="2" stroke={PIN} fill="none" />}
            <text transform={`translate(${x - 2} 376) rotate(-90)`} fontSize="11" fill={PIN}>{no}</text>
            <text transform={`translate(${x + 4} 384) rotate(-90)`} textAnchor="end" fill={NAME}>{name}</text>
          </g>
        );
      })}
      {bottomPins.map(([col, no, name, wired]) => {
        const x = Math.round(893 + col * STEP);
        return (
          <g key={no}>
            <path d={`M${x} 678V689M${x - 2} 673h3v4h-3z`} stroke={PIN} fill="none" shapeRendering="crispEdges" />
            {!wired && <circle cx={x} cy="690" r="2" stroke={PIN} fill="none" />}
            <text transform={`translate(${x - 2} 678) rotate(-90)`} textAnchor="end" fontSize="11" fill={PIN}>{no}</text>
            <text transform={`translate(${x + 3} 672) rotate(-90)`} fill={NAME}>{name}</text>
          </g>
        );
      })}

      <g fill={NOTE}>
        {notes.map(([x, y, t]) => <text key={`${x}-${y}`} x={x} y={y}>{t}</text>)}
        <text x="1277" y="931" fontSize="12">12-09-2023</text>
      </g>
      <g fill={FRAME} fontSize="12">
        {blockTexts.map(([x, y, t]) => <text key={t} x={x} y={y} xmlSpace="preserve">{t}</text>)}
        <text x="1138" y="914" fontSize="15" fontWeight="700" fontStyle="italic">Title:</text>
      </g>
    </g>
  </Sheet>
);

/* ---------- window ---------- */

const menus = ["File", "Edit", "View", "Place", "Inspect", "Tools", "Preferences", "Help"];

const messages = [
  ["Sheet Name", "Untitled Sheet"],
  ["Hierarchical Path", "one/Untitled Sheet"],
  ["File Name", "untitled.kicad_sch"],
];

const status = [
  "File 'C:\\Users\\ADWIN ADI\\OneDrive\\Documents\\one\\one.kicad_sch' saved.",
  "Z 1.37",
  "X 2825.00  Y 1525.00",
  "dx 2825.00  dy 1525.00  dist 3210.33",
  "grid 25.00",
  "mils",
  "Add Sheet",
  "",
];

export default function App() {
  return (
    <>
      <GlobalStyle />
      <Window>
        <TitleBar>
          <svg width="20" height="20" viewBox="0 0 20 20" aria-hidden="true">
            <rect width="20" height="20" rx="3" fill="#d2c5ad" />
            <path d="M0 14h5M6 10v8M6 13l4-3V5M6 16l4 3M3 2h5M12 12h4M11 15h5" stroke="#333" strokeWidth="1.600" fill="none" />
            <path d="M8 0h3v5H8zM12 7h8v3h-8z" fill="#c8284c" />
          </svg>
          <WindowTitle>one — Schematic Editor</WindowTitle>
          <WindowButton type="button" aria-label="Minimize">
            <svg width="12" height="12"><path d="M0 6h12" stroke="#888" shapeRendering="crispEdges" /></svg>
          </WindowButton>
          <WindowButton type="button" aria-label="Restore">
            <svg width="12" height="12" fill="none" stroke="#888">
              <rect x="1" y="3" width="8" height="8" rx="1" />
              <path d="M3 1h6q2 0 2 2v6" />
            </svg>
          </WindowButton>
          <WindowButton type="button" aria-label="Close">
            <svg width="12" height="12"><path d="M0 0l12 12M12 0L0 12" stroke="#777" /></svg>
          </WindowButton>
        </TitleBar>
        <MenuBar aria-label="Main menu">
          {menus.map((m) => <MenuItem key={m} type="button">{m}</MenuItem>)}
        </MenuBar>
        <TopTools role="toolbar" aria-label="Main tools">
          <Tools items={topTools} />
        </TopTools>
        <Work>
          <Hierarchy>
            <HierarchyHead>
              Schematic Hierarchy
              <button type="button" aria-label="Close panel">
                <svg width="10" height="10"><path d="M1 1l7 7M8 1L1 8" stroke="#000" strokeWidth="1.500" /></svg>
              </button>
            </HierarchyHead>
            <HierarchyItem type="button"><Bullet />Root (page 1)</HierarchyItem>
          </Hierarchy>
          <Sash />
          <SideTools role="toolbar" aria-label="Display options">
            <Tools items={leftTools} flat />
          </SideTools>
          <Canvas>
            <Schematic />
          </Canvas>
          <SideTools role="toolbar" aria-label="Drawing tools">
            <Tools items={rightTools} flat />
          </SideTools>
        </Work>
        <MessagePanel>
          {messages.map(([k, v]) => (
            <div key={k}>
              <dt>{k}</dt>
              <dd>{v}</dd>
            </div>
          ))}
        </MessagePanel>
        <StatusBar>
          {status.map((s, i) => <StatusField key={i}>{s}</StatusField>)}
        </StatusBar>
      </Window>
    </>
  );
}
